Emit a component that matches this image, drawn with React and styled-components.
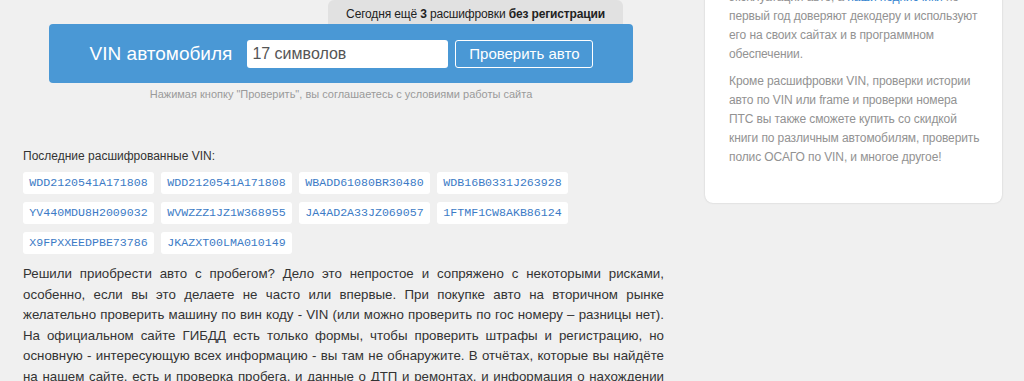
import React from "react";
import styled, { createGlobalStyle } from "styled-components";

const recentVins = [
  "WDD2120541A171808",
  "WDD2120541A171808",
  "WBADD61080BR30480",
  "WDB16B0331J263928",
  "YV440MDU8H2009032",
  "WVWZZZ1JZ1W368955",
  "JA4AD2A33JZ069057",
  "1FTMF1CW8AKB86124",
  "X9FPXXEEDPBE73786",
  "JKAZXT00LMA010149",
];

const GlobalStyle = createGlobalStyle`
  html, body {
    margin: 0;
    padding: 0;
    background: #f0f0f0;
    overflow: hidden;
  }

  body {
    font-family: "Liberation Sans", Arial, sans-serif;
    color: #333;
  }
`;

const App = () => {
  return (
    <>
      <GlobalStyle />
      <Page>
        <Main>
          <Search>
            <Tab>
              Сегодня ещё <b>3</b> расшифровки <b>без регистрации</b>
            </Tab>
            <SearchBar>
              <Label>VIN автомобиля</Label>
              <Input placeholder="17 символов" />
              <Button>Проверить авто</Button>
            </SearchBar>
            <Agreement>
              Нажимая кнопку "Проверить", вы соглашаетесь с условиями работы сайта
            </Agreement>
          </Search>

          <RecentTitle>Последние расшифрованные VIN:</RecentTitle>
          <VinList>
            {recentVins.map((vin, i) => (
              <VinChip key={i} href="#">
                {vin}
              </VinChip>
            ))}
          </VinList>

          <Article>
            Решили приобрести авто с пробегом? Дело это непростое и сопряжено с
            некоторыми рисками, особенно, если вы это делаете не часто или
            впервые. При покупке авто на вторичном рынке желательно проверить
            машину по вин коду - VIN (или можно проверить по гос номеру – разницы
            нет). На официальном сайте ГИБДД есть только формы, чтобы проверить
            штрафы и регистрацию, но основную - интересующую всех информацию - вы
            там не обнаружите. В отчётах, которые вы найдёте на нашем сайте, есть и
            проверка пробега, и данные о ДТП и ремонтах, и информация о нахождении
            в&nbsp;залоге и розыске.
          </Article>
        </Main>

        <Sidebar>
          <SideText>
            эксплуатации авто, а <a href="#">наши подписчики</a> по
            <br />
            первый год доверяют декодеру и используют его на своих сайтах и в
            программном обеспечении.
          </SideText>
          <SideText>
            Кроме расшифровки VIN, проверки истории авто по VIN или frame и
            проверки номера ПТС вы также сможете купить со скидкой книги по
            различным автомобилям, проверить полис ОСАГО по VIN, и многое другое!
          </SideText>
        </Sidebar>
      </Page>
    </>
  );
};

const Page = styled.div`
  display: flex;
  align-items: flex-start;
  gap: 41px;
  padding-left: 23px;
`;

const Main = styled.main`
  width: 641px;
  flex-shrink: 0;
`;

const Search = styled.div`
  display: flex;
  flex-direction: column;
  margin: 0 31px 0 26px;
`;

const Tab = styled.div`
  align-self: flex-end;
  margin-right: 10px;
  width: 295px;
  height: 24px;
  line-height: 29px;
  text-align: center;
  font-size: 12px;
  letter-spacing: -0.15px;
  color: #222;
  background: #e1e1e1;
  border-radius: 6px 6px 0 0;
`;

const SearchBar = styled.div`
  display: flex;
  align-items: center;
  justify-content: center;
  height: 59px;
  background: #4a98d5;
  border-radius: 4px;
  padding-left: 1px;
`;

const Label = styled.span`
  font-size: 19px;
  color: #fff;
  margin-right: 15px;
`;

const Input = styled.input`
  box-sizing: border-box;
  width: 201px;
  height: 28px;
  border: none;
  border-radius: 3px;
  padding: 0 5px;
  font-family: "Liberation Sans", Arial, sans-serif;
  font-size: 16px;
  margin-right: 7px;
  outline: none;

  &::placeholder {
    color: #555;
  }
`;

const Button = styled.button`
  box-sizing: border-box;
  width: 138px;
  height: 28px;
  border: 1px solid #fff;
  border-radius: 3px;
  background: transparent;
  color: #fff;
  font-family: "Liberation Sans", Arial, sans-serif;
  font-size: 15px;
  cursor: pointer;
`;

const Agreement = styled.div`
  margin-top: 4px;
  text-align: center;
  font-size: 11px;
  line-height: 14px;
  color: #9a9a9a;
`;

const RecentTitle = styled.div`
  margin-top: 48px;
  font-size: 12px;
  line-height: 15px;
  color: #333;
`;

const VinList = styled.div`
  display: grid;
  grid-template-columns: repeat(4, 131px);
  column-gap: 7px;
  row-gap: 8px;
  margin-top: 8px;
`;

const VinChip = styled.a`
  display: block;
  height: 22px;
  line-height: 22px;
  background: #fff;
  border-radius: 3px;
  text-align: center;
  font-family: "Liberation Mono", "Courier New", monospace;
  font-size: 11.6px;
  color: #3c7bc6;
  text-decoration: none;
`;

const Article = styled.p`
  margin: 10px 0 0;
  font-size: 13.3px;
  line-height: 20.5px;
  text-align: justify;
  color: #333;
`;

const Sidebar = styled.aside`
  box-sizing: border-box;
  width: 297px;
  flex-shrink: 0;
  margin-top: -22px;
  padding: 10px 20px 36px 24px;
  background: #fff;
  border-radius: 8px;
  box-shadow: 0 0 2px rgba(0, 0, 0, 0.18);
`;

const SideText = styled.p`
  margin: 0 0 8px;
  font-size: 12px;
  line-height: 19px;
  letter-spacing: -0.1px;
  color: #929292;

  &:last-child {
    margin-bottom: 0;
  }

  a {
    color: #3a87d0;
    text-decoration: none;
  }
`;

export default App;
